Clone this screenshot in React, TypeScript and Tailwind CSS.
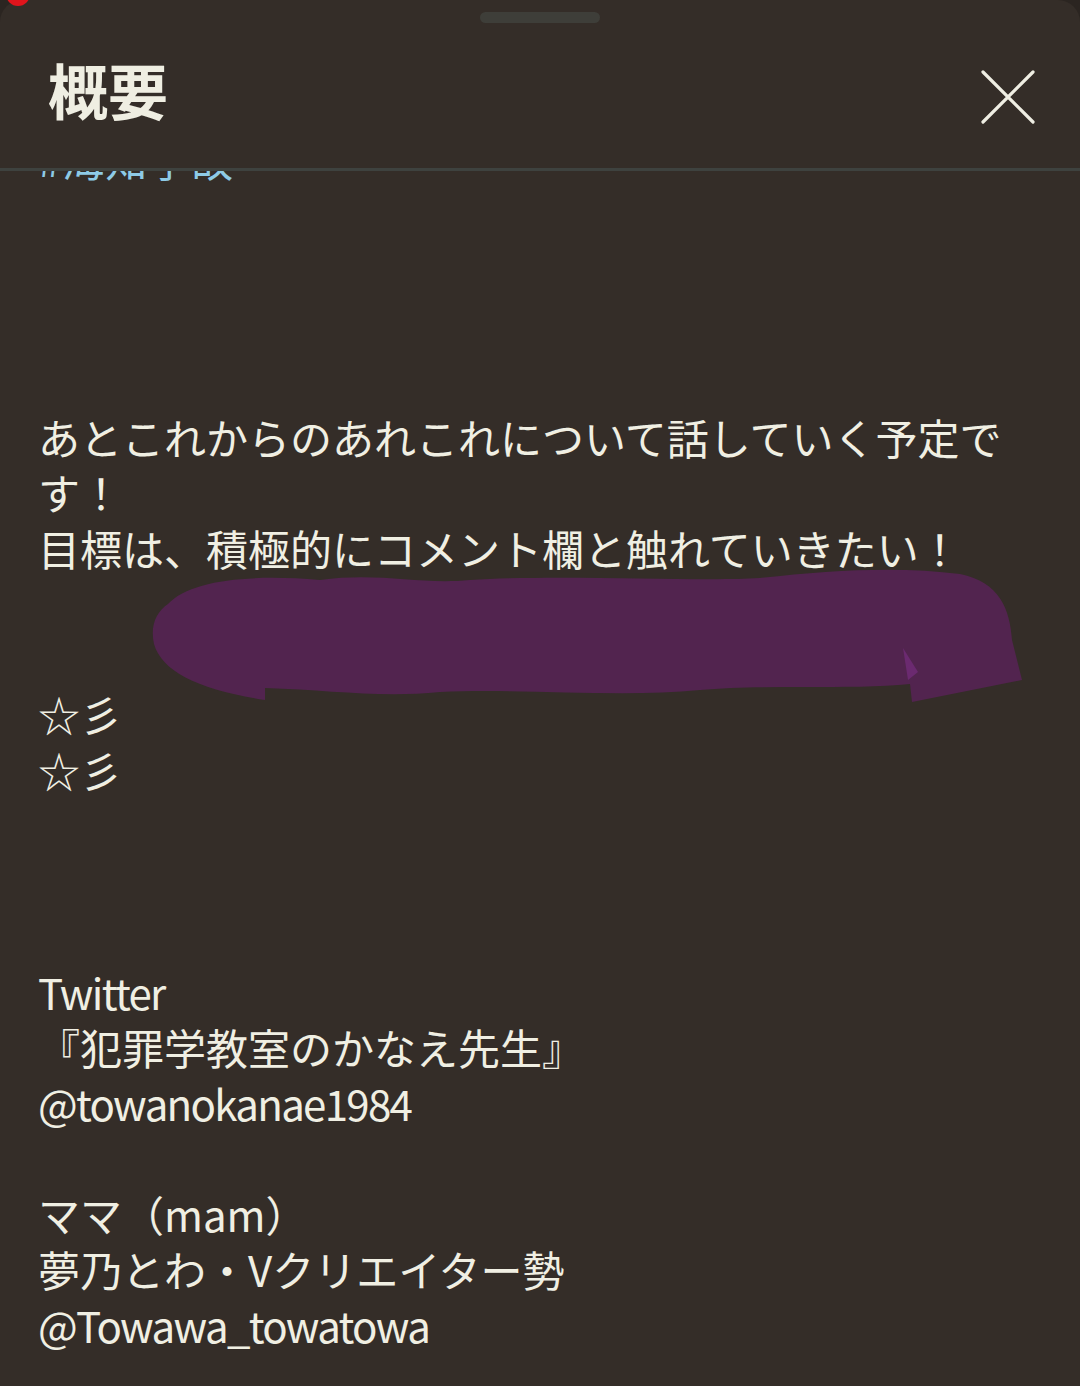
const lines: { text: string; blue?: boolean; latin?: boolean }[] = [
  { text: '#海知学故', blue: true },
  { text: '' },
  { text: '' },
  { text: '' },
  { text: '' },
  { text: 'あとこれからのあれこれについて話していく予定で' },
  { text: 'す！' },
  { text: '目標は、積極的にコメント欄と触れていきたい！' },
  { text: '' },
  { text: '' },
  { text: '☆彡' },
  { text: '☆彡' },
  { text: '' },
  { text: '' },
  { text: '' },
  { text: 'Twitter', latin: true },
  { text: '『犯罪学教室のかなえ先生』' },
  { text: '@towanokanae1984', latin: true },
  { text: '' },
  { text: 'ママ（mam）' },
  { text: '夢乃とわ・Vクリエイター勢' },
  { text: '@Towawa_towatowa', latin: true },
];

function CloseIcon() {
  return (
    <svg width="56" height="56" viewBox="0 0 56 56" fill="none">
      <path d="M3 3 L53 53 M53 3 L3 53" stroke="#efeee3" strokeWidth="3.2" strokeLinecap="round" />
    </svg>
  );
}

function Scribble() {
  return (
    <svg
      className="pointer-events-none absolute left-0 top-0"
      width="1080"
      height="1386"
      viewBox="0 0 1080 1386"
    >
      <path
        d="M168 604 C190 580 250 574 320 580 C380 572 420 585 470 580 C560 574 700 582 760 578 C830 570 900 566 960 574 C1000 582 1010 610 1012 640 L1022 680 L912 702 L910 684 C850 690 760 684 700 690 C620 698 520 688 440 692 C380 698 330 690 265 688 L265 700 C200 690 162 672 154 644 C150 626 156 612 168 604 Z"
        fill="#52244f"
      />
      <path d="M903 648 L918 672 L908 680 Z" fill="#6b2a70" />
    </svg>
  );
}

export default function App() {
  return (
    <div
      className="relative h-[1386px] w-[1080px] overflow-hidden bg-[#2b2521]"
      style={{ fontFamily: '"Noto Sans CJK JP", "Noto Sans", sans-serif' }}
    >
      <div className="flex h-full flex-col overflow-hidden rounded-t-[22px] bg-[#342d28]">
        <div className="flex h-[168px] shrink-0 flex-col">
          <div className="flex justify-center pt-[12px]">
            <div className="h-[11px] w-[120px] rounded-full bg-[#3e3e39]" />
          </div>
          <div className="flex items-start justify-between pl-[48px] pr-[44px] pt-[38px]">
            <h1 className="mt-[-2px] text-[60px] font-bold leading-none text-[#efeee2]">概要</h1>
            <div className="mt-[8px]">
              <CloseIcon />
            </div>
          </div>
        </div>
        <div className="h-[3px] shrink-0 bg-[#3e423f]" />
        <div className="relative flex-1 overflow-hidden">
          <div className="-mt-[40px] px-[38px] text-[42px] leading-[55.5px] text-[#f0efe3]">
            {lines.map((l, i) => (
              <div
                key={i}
                className={
                  l.blue
                    ? 'h-[55.5px] whitespace-nowrap text-[#8ecae6] tracking-[1px]'
                    : l.latin
                      ? 'h-[55.5px] whitespace-nowrap tracking-[-1.7px]'
                      : 'h-[55.5px] whitespace-nowrap'
                }
              >
                {l.text}
              </div>
            ))}
          </div>
        </div>
      </div>
      <Scribble />
      <div className="absolute left-[6px] -top-[18px] h-[24px] w-[24px] rounded-full bg-[#e0141c]" />
    </div>
  );
}
